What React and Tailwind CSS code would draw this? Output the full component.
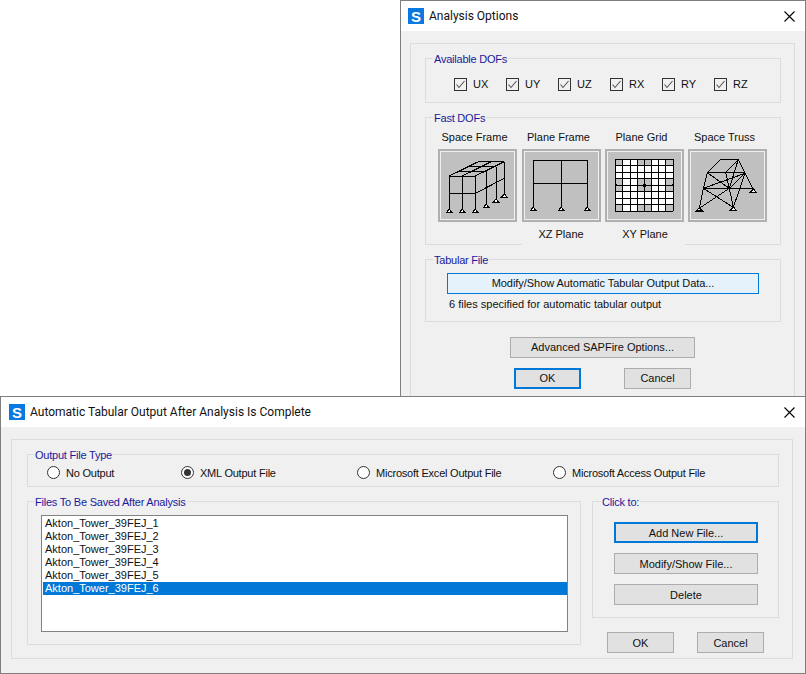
const FONT = 'font-["Liberation_Sans",Arial,sans-serif]'

function Logo() {
  return (
    <div className='flex h-[16px] w-[16px] shrink-0 items-center justify-center bg-[#0a78e0] text-[15px] leading-none font-bold text-white'>
      S
    </div>
  )
}

function CloseX() {
  return (
    <svg width='11' height='11' viewBox='0 0 11 11' className='ml-auto shrink-0'>
      <path d='M0.5 0.5 L10.5 10.5 M10.5 0.5 L0.5 10.5' stroke='#000' strokeWidth='1.1' fill='none' />
    </svg>
  )
}

function TitleBar({ title, pad }) {
  return (
    <div className={`flex h-[30px] shrink-0 items-center bg-white pr-[10px] ${pad}`}>
      <Logo />
      <span className='ml-[5px] font-["Roboto",sans-serif] text-[12px] text-[#111]'>{title}</span>
      <CloseX />
    </div>
  )
}

function GroupBox({ label, className = '', labelPos = 'top-[-7px] left-[7px]', children }) {
  return (
    <div className={`relative border border-[#dcdcdc] ${className}`}>
      <span className={`absolute ${labelPos} bg-[#f0f0f0] px-px text-[11px] leading-[14px] tracking-[-0.22px] text-[#1a1a9c]`}>{label}</span>
      {children}
    </div>
  )
}

function Btn({ className = '', children }) {
  return (
    <div className={`flex h-[21px] items-center justify-center border border-[#adadad] bg-[#e1e1e1] text-[11px] text-[#111] ${className}`}>
      {children}
    </div>
  )
}

function DefaultBtn({ className = '', children }) {
  return (
    <div className={`flex h-[21px] items-center justify-center border-2 border-[#0078d7] bg-[#e1e1e1] text-[11px] text-[#111] ${className}`}>
      {children}
    </div>
  )
}

function Check({ label }) {
  return (
    <div className='flex w-[52px] items-center'>
      <div className='h-[13px] w-[13px] shrink-0 border border-[#333]'>
        <svg width='11' height='11' viewBox='0 0 11 11'>
          <path d='M1.5 5.5 L4 8.5 L9.5 2' stroke='#555' strokeWidth='1.1' fill='none' />
        </svg>
      </div>
      <span className='ml-[6px] text-[11px] leading-[13px] text-[#111]'>{label}</span>
    </div>
  )
}

function Radio({ label, on, className = '' }) {
  return (
    <div className={`flex items-center ${className}`}>
      <div className='flex h-[13px] w-[13px] shrink-0 items-center justify-center rounded-full border border-[#333] bg-white'>
        {on && <div className='h-[7px] w-[7px] rounded-full bg-[#333]' />}
      </div>
      <span className='ml-[6px] pt-px text-[11px] leading-[13px] tracking-[-0.22px] text-[#111]'>{label}</span>
    </div>
  )
}

function Support({ x, y }) {
  return <path d={`M${x} ${y} L${x + 9} ${y + 10} L${x - 9} ${y + 10} Z`} fill='#fff' stroke='#000' strokeWidth='3.5' />
}

function Pic({ viewBox, children }) {
  return (
    <div className='h-[73px] w-[79px] border-2 border-[#b0b0b0] p-px'>
      <svg width='73' height='67' viewBox={viewBox} shapeRendering='crispEdges' className='block bg-[#c0c0c0]'>
        {children}
      </svg>
    </div>
  )
}

function SpaceFrame() {
  return (
    <Pic viewBox='18 21 219 201'>
      <path
        d='M43 193 V93 H121 V193 M82 193 V93 M43 145 H121 M43 93 L130 50 H208 L121 93 M82 93 L169 50 M72 78 H154 M101 65 H183 M154 78 V178 M183 65 V163 M208 50 V148 M121 145 L208 100'
        stroke='#000'
        strokeWidth='3'
        fill='none'
      />
      {[[43, 193], [82, 193], [121, 193], [154, 178], [183, 162], [208, 147]].map(([x, y]) => (
        <Support key={x} x={x} y={y} />
      ))}
    </Pic>
  )
}

function PlaneFrame() {
  return (
    <Pic viewBox='315 81 219 201'>
      <path d='M340 247 V106 H502 V247 M424 247 V106 M340 176 H502' stroke='#000' strokeWidth='3' fill='none' />
      {[340, 424, 502].map((x) => (
        <Support key={x} x={x} y={247} />
      ))}
    </Pic>
  )
}

function PlaneGrid() {
  const xs = [40, 62, 84, 105, 127, 148, 170, 191, 213]
  const ys = [43, 62, 82, 101, 120, 140, 159, 179, 198]
  const gray = [
    [0, 0], [3, 0], [4, 0], [7, 0],
    [0, 3], [3, 3], [4, 3], [7, 3],
    [0, 4], [3, 4], [4, 4], [7, 4],
    [0, 7], [3, 7], [4, 7], [7, 7],
  ]
  return (
    <Pic viewBox='18 21 219 201'>
      <rect x='40' y='43' width='173' height='155' fill='#fff' />
      {gray.map(([c, r]) => (
        <rect key={`${c}-${r}`} x={xs[c]} y={ys[r]} width={xs[c + 1] - xs[c]} height={ys[r + 1] - ys[r]} fill='#c0c0c0' />
      ))}
      {xs.map((x) => (
        <path key={x} d={`M${x} 43 V198`} stroke='#000' strokeWidth='3' />
      ))}
      {ys.map((y) => (
        <path key={y} d={`M40 ${y} H213`} stroke='#000' strokeWidth='3' />
      ))}
      <rect x='123' y='116' width='9' height='9' fill='#000' />
      <path d='M38 120 H44 M209 120 H215 M127 41 V47 M127 194 V200' stroke='#000' strokeWidth='5' />
    </Pic>
  )
}

function SpaceTruss() {
  return (
    <Pic viewBox='18 21 219 201'>
      <path
        d='M107 43 H160 L180 85 L205 133 M107 43 L67 83 L55 130 L43 190 M67 83 H180 M122 83 L160 43 M55 130 H205 M133 130 L145 187 M43 190 L133 130 M55 130 L145 187 M67 83 L133 130 M180 85 L133 130 M160 43 L133 130 M122 83 L133 130 M55 130 L180 85 M180 85 L145 187'
        stroke='#000'
        strokeWidth='3'
        fill='none'
      />
      <rect x='127' y='124' width='9' height='9' fill='#000' />
      {[[43, 188], [145, 186], [205, 132]].map(([x, y]) => (
        <Support key={x} x={x} y={y} />
      ))}
    </Pic>
  )
}

function AnalysisOptions() {
  return (
    <div className='absolute top-0 left-[400px] flex h-[400px] w-[406px] flex-col overflow-hidden border-x border-t border-[#7f7f7f] bg-[#f0f0f0]'>
      <TitleBar title='Analysis Options' pad='pl-[7px]' />
      <div className='pt-[12px] pl-[9px]'>
        <div className='h-[400px] w-[385px] border border-[#dcdcdc] pt-[14px] pl-[14px]'>
          <GroupBox label='Available DOFs' className='h-[45px] w-[356px] pt-[19px] pl-[28px]'>
            <div className='flex'>
              {['UX', 'UY', 'UZ', 'RX', 'RY', 'RZ'].map((d) => (
                <Check key={d} label={d} />
              ))}
            </div>
          </GroupBox>

          <GroupBox label='Fast DOFs' className='mt-[14px] h-[128px] w-[356px] pl-[12px]'>
            <div className='flex'>
              <div className='w-[84px] pt-[12px]'>
                <div className='h-[14px] w-[73px] text-center text-[11px] leading-[14px] text-[#111]'>Space Frame</div>
                <div className='mt-[5px]'><SpaceFrame /></div>
              </div>
              <div className='w-[83px] pt-[12px]'>
                <div className='h-[14px] w-[73px] text-center text-[11px] leading-[14px] text-[#111]'>Plane Frame</div>
                <div className='mt-[5px]'><PlaneFrame /></div>
                <div className='relative mt-[5px] h-[20px] bg-[#f0f0f0] pr-[5px] text-center text-[11px] leading-[14px] text-[#111]'>XZ Plane</div>
              </div>
              <div className='w-[83px] pt-[12px]'>
                <div className='h-[14px] w-[73px] text-center text-[11px] leading-[14px] text-[#111]'>Plane Grid</div>
                <div className='mt-[5px]'><PlaneGrid /></div>
                <div className='relative mt-[5px] h-[20px] w-[80px] bg-[#f0f0f0] text-center text-[11px] leading-[14px] text-[#111]'>XY Plane</div>
              </div>
              <div className='w-[79px] pt-[12px]'>
                <div className='h-[14px] w-[73px] text-center text-[11px] leading-[14px] whitespace-nowrap text-[#111]'>Space Truss</div>
                <div className='mt-[5px]'><SpaceTruss /></div>
              </div>
            </div>
          </GroupBox>

          <GroupBox label='Tabular File' className='mt-[14px] h-[63px] w-[356px] pt-[13px] pl-[21px]'>
            <div className='flex h-[21px] w-[312px] items-center justify-center border border-[#0078d7] bg-[#e5f1fb] text-[11px] tracking-[-0.05px] text-[#111]'>
              Modify/Show Automatic Tabular Output Data...
            </div>
            <div className='mt-[3px] pl-[2px] text-[11px] leading-[14px] text-[#111]'>6 files specified for automatic tabular output</div>
          </GroupBox>

          <Btn className='mt-[15px] ml-[85px] w-[185px]'>Advanced SAPFire Options...</Btn>
          <div className='mt-[10px] ml-[89px] flex'>
            <DefaultBtn className='w-[67px]'>OK</DefaultBtn>
            <Btn className='ml-[43px] w-[67px]'>Cancel</Btn>
          </div>
        </div>
      </div>
    </div>
  )
}

const files = ['Akton_Tower_39FEJ_1', 'Akton_Tower_39FEJ_2', 'Akton_Tower_39FEJ_3', 'Akton_Tower_39FEJ_4', 'Akton_Tower_39FEJ_5', 'Akton_Tower_39FEJ_6']

function TabularOutput() {
  return (
    <div className='absolute top-[396px] left-0 flex h-[278px] w-[806px] flex-col border border-[#7f7f7f] bg-[#f0f0f0]'>
      <TitleBar title='Automatic Tabular Output After Analysis Is Complete' pad='pl-[8px]' />
      <div className='pt-[12px] pl-[10px]'>
        <div className='h-[220px] w-[782px] border border-[#dcdcdc] pt-[14px] pl-[15px]'>
          <GroupBox label='Output File Type' labelPos='top-[-7px] left-[6px]' className='flex h-[33px] w-[752px] pt-[11px] pl-[19px]'>
            <Radio label='No Output' className='h-[13px] w-[134px]' />
            <Radio label='XML Output File' on className='h-[13px] w-[176px]' />
            <Radio label='Microsoft Excel Output File' className='h-[13px] w-[196px]' />
            <Radio label='Microsoft Access Output File' className='h-[13px]' />
          </GroupBox>

          <div className='mt-[14px] flex'>
            <GroupBox label='Files To Be Saved After Analysis' labelPos='top-[-7px] left-[6px]' className='h-[144px] w-[554px] pt-[13px] pl-[13px]'>
              <div className='h-[117px] w-[527px] border border-[#828282] bg-white pt-px pl-px'>
                {files.map((f, i) => (
                  <div key={f} className={`h-[13px] pl-[2px] text-[11px] leading-[13px] ${i === 5 ? 'bg-[#0078d7] text-white' : 'text-[#111]'}`}>
                    {f}
                  </div>
                ))}
              </div>
            </GroupBox>

            <div className='ml-[11px]'>
              <GroupBox label='Click to:' labelPos='top-[-7px] left-[8px]' className='h-[117px] w-[187px] pt-[20px] pl-[21px]'>
                <DefaultBtn className='w-[144px] pt-px'>Add New File...</DefaultBtn>
                <Btn className='mt-[10px] w-[144px] pt-px'>Modify/Show File...</Btn>
                <Btn className='mt-[10px] w-[144px] pt-px'>Delete</Btn>
              </GroupBox>
              <div className='mt-[14px] ml-[15px] flex'>
                <Btn className='w-[67px] pt-px'>OK</Btn>
                <Btn className='ml-[23px] w-[67px] pt-px'>Cancel</Btn>
              </div>
            </div>
          </div>
        </div>
      </div>
    </div>
  )
}

export default function App() {
  return (
    <div className={`relative h-[674px] w-[806px] overflow-hidden bg-white ${FONT}`}>
      <AnalysisOptions />
      <TabularOutput />
    </div>
  )
}
